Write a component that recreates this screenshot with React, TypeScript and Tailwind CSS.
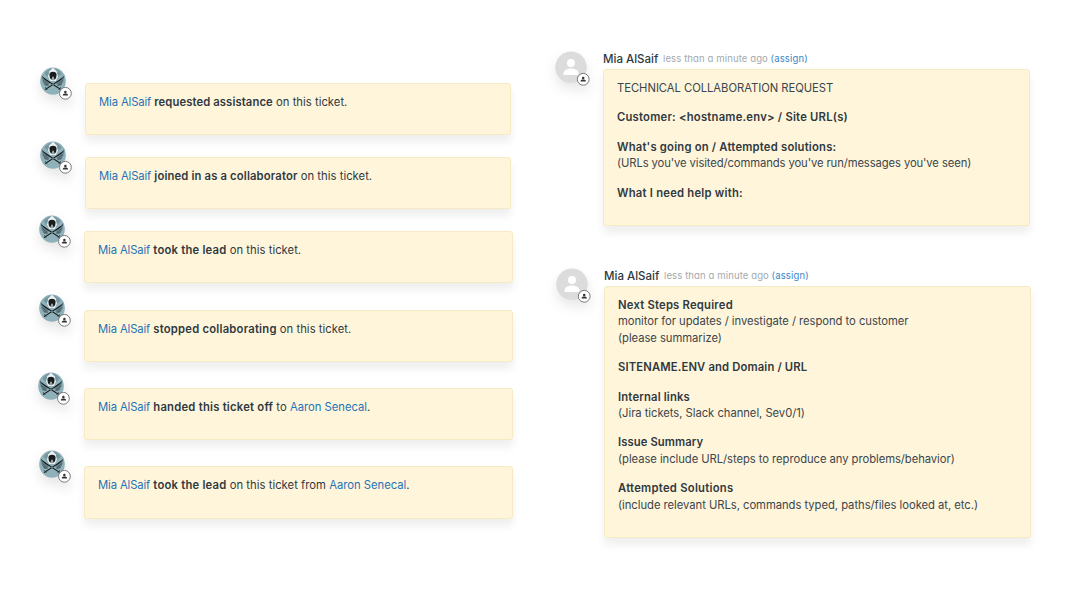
import type { ReactNode } from "react";

function Badge({ cx, cy }: { cx: number; cy: number }) {
  return (
    <g transform={`translate(${cx} ${cy})`}>
      <circle r="5.9" fill="#fff" stroke="#6b6b6b" strokeWidth="0.9" />
      <circle cy="-1.4" r="1.25" fill="#333" />
      <path d="M-2.6 2.2V1.7C-2.6.6-1 .3 0 .3S2.6.6 2.6 1.7V2.2Z" fill="#333" />
    </g>
  );
}

function SwordsAvatar() {
  return (
    <svg
      className="block h-8 w-8 shrink-0 overflow-visible drop-shadow-[0_6px_6px_rgba(0,0,0,0.1)]"
      viewBox="0 0 32 32"
    >
      <ellipse cx="13" cy="14.1" rx="12.8" ry="13.6" fill="#8fb1ba" />
      <path d="M4.4 6.6C7 3 10 1.700 13 1.500c3.200.2 6.200 1.500 8.700 5.100L17.500 10.400h-9Z" fill="#78969f" />
      <path d="M13 .8 9.400 4.200 8 9.400 10.200 13.900h5.600L18 9.400l-1.400-5.200Z" fill="#edf3f4" />
      <path d="M1.800 10 5 11.300l5 4-1.500 3.900-3.400-.4L2.800 15ZM24.200 10 21 11.300l-5 4 1.500 3.900 3.400-.4 2.300-3.800Z" fill="#67818a" />
      <path d="M3 13.600l4.500 3.200M4.200 16.900l4 1.200M23 13.600l-4.500 3.200M21.800 16.900l-4 1.200" stroke="#38464b" strokeWidth="0.6" />
      <path d="M13 4.700c-2.200 0-3.600 1.200-3.600 3l.5 3.300 1.600 1.900.7-3.100h1.600l.7 3.100 1.600-1.900.5-3.300c0-1.800-1.400-3-3.600-3Z" fill="#171c1f" />
      <path d="M12.600 9.500h.8v3.700h-.8Z" fill="#22292c" />
      <path d="M1.500 7.900c1.800 2.800 5 4.400 8 6.600L21.300 22.300l-.7.8L9 15.600C5.500 13.300 2.700 11.500 1.500 7.900ZM24.600 7.900c-1.800 2.800-5 4.400-8 6.600L4.700 22.300l.7.8L17 15.600c3.600-2.300 6.400-4.100 7.600-7.700Z" fill="#14191b" />
      <path d="M5.300 20.300l1.900 2.500M20.700 20.300l-1.900 2.500" stroke="#1d2427" strokeWidth="0.8" />
      <Badge cx={25.4} cy={26.3} />
    </svg>
  );
}

function BlankAvatar() {
  return (
    <svg
      className="block h-9 w-9 shrink-0 overflow-visible drop-shadow-[0_6px_6px_rgba(0,0,0,0.09)]"
      viewBox="0 0 36 36"
    >
      <circle cx="16" cy="16.3" r="15.8" fill="#dcdcdc" />
      <circle cx="16" cy="12" r="4" fill="#fff" />
      <path d="M8.600 23.900v-2c0-2.900 4.500-4.400 7.400-4.400s7.400 1.500 7.400 4.400v2Z" fill="#fff" />
      <Badge cx={28.2} cy={28.3} />
    </svg>
  );
}

const card =
  "rounded-[3px] border border-[#f7e9c2] bg-[#fff5da] shadow-[0_7px_9px_rgba(0,0,0,0.065)]";

function Mia() {
  return <span className="tracking-[-0.12px] text-[#1f73b7]">Mia AlSaif</span>;
}

function Aaron() {
  return <span className="tracking-[-0.01px] text-[#1f73b7]">Aaron Senecal</span>;
}

function Event({ row, box, children }: { row: string; box: string; children: ReactNode }) {
  return (
    <div className={`flex shrink-0 items-start ${row}`}>
      <SwordsAvatar />
      <div className={`${card} mt-4 shrink-0 pl-[13px] ${box}`}>
        <p className="whitespace-pre pt-[9px] text-[11.25px] leading-[18px] tracking-[0.03px] text-[#2f3941]">
          {children}
        </p>
      </div>
    </div>
  );
}

function Note({ className, box, children }: { className: string; box: string; children: ReactNode }) {
  return (
    <section className={`flex items-start ${className}`}>
      <BlankAvatar />
      <div className="ml-3 flex flex-col">
        <header className="flex h-[18px] items-start whitespace-nowrap leading-[16px]">
          <span className="w-[60px] text-[11.5px] font-medium tracking-[0.01px] text-[#2f3941]">Mia AlSaif</span>
          <span className="w-[107.5px] text-[9.5px] tracking-[0.12px] text-[#a3a9ae] [font-feature-settings:'cv11']">
            less than a minute ago
          </span>
          <span className="text-[9.5px] tracking-[0.18px] text-[#3a86c8]">(assign)</span>
        </header>
        <div className={`${card} flex flex-col gap-[13px] pl-[13px] ${box}`}>{children}</div>
      </div>
    </section>
  );
}

function Group({ children }: { children: ReactNode }) {
  return (
    <div className="whitespace-nowrap text-[11.25px] leading-[16.4px] text-[#3b454c]">{children}</div>
  );
}

function Title({ className, children }: { className: string; children: ReactNode }) {
  return <p className={`font-semibold text-[#2f3941] ${className}`}>{children}</p>;
}

export default function App() {
  return (
    <main className="flex h-[600px] w-[1080px] items-start overflow-hidden bg-white font-['Inter','Liberation_Sans',sans-serif]">
      <div className="flex w-[554px] shrink-0 flex-col pt-[67px]">
        <Event row="h-[74px] pl-[40px]" box="ml-[13px] h-[52px] w-[426px]">
          <Mia /> <b className="font-semibold tracking-[0.1px]">requested assistance</b> on this ticket.
        </Event>
        <Event row="h-[74px] pl-[40px]" box="ml-[13px] h-[52px] w-[426px]">
          <Mia /> <b className="font-semibold tracking-[0.15px]">joined in as a collaborator</b> on this ticket.
        </Event>
        <Event row="h-[79px] pl-[39px]" box="ml-[13px] h-[52px] w-[429px]">
          <Mia /> <b className="font-semibold tracking-[0.22px]">took the lead</b> on this ticket.
        </Event>
        <Event row="h-[78px] pl-[39px]" box="ml-[13px] h-[52px] w-[429px]">
          <Mia /> <b className="font-semibold tracking-[0.22px]">stopped collaborating</b> on this ticket.
        </Event>
        <Event row="h-[78px] pl-[38px]" box="ml-[14px] h-[52px] w-[429px]">
          <Mia /> <b className="font-semibold tracking-[0.23px]">handed this ticket off</b> to <Aaron />.
        </Event>
        <Event row="h-[79px] pl-[39px]" box="ml-[13px] h-[53px] w-[429px]">
          <Mia /> <b className="font-semibold tracking-[0.22px]">took the lead</b> on this ticket from <Aaron />.
        </Event>
      </div>
      <div className="flex flex-col pt-[51px]">
        <Note className="h-[217px] pl-[1px]" box="h-[157px] w-[427px] pt-[10px]">
          <Group>
            <p className="tracking-[-0.04px]">TECHNICAL COLLABORATION REQUEST</p>
          </Group>
          <Group>
            <Title className="tracking-[0.223px]">Customer: &lt;hostname.env&gt; / Site URL(s)</Title>
          </Group>
          <Group>
            <Title className="tracking-[0.206px]">What's going on / Attempted solutions:</Title>
            <p className="tracking-[-0.101px]">(URLs you've visited/commands you've run/messages you've seen)</p>
          </Group>
          <Group>
            <Title className="tracking-[0.227px]">What I need help with:</Title>
          </Group>
        </Note>
        <Note className="pl-[2px]" box="h-[252px] w-[427px] pt-[10px]">
          <Group>
            <Title className="tracking-[0.214px]">Next Steps Required</Title>
            <p className="tracking-[-0.048px]">monitor for updates / investigate / respond to customer</p>
            <p className="tracking-[-0.048px]">(please summarize)</p>
          </Group>
          <Group>
            <Title className="tracking-[0.143px]">SITENAME.ENV and Domain / URL</Title>
          </Group>
          <Group>
            <Title className="tracking-[0.172px]">Internal links</Title>
            <p className="tracking-[-0.04px]">(Jira tickets, Slack channel, Sev0/1)</p>
          </Group>
          <Group>
            <Title className="tracking-[0.1px]">Issue Summary</Title>
            <p className="tracking-[-0.055px]">(please include URL/steps to reproduce any problems/behavior)</p>
          </Group>
          <Group>
            <Title className="tracking-[0.265px]">Attempted Solutions</Title>
            <p className="tracking-[-0.04px]">(include relevant URLs, commands typed, paths/files looked at, etc.)</p>
          </Group>
        </Note>
      </div>
    </main>
  );
}
